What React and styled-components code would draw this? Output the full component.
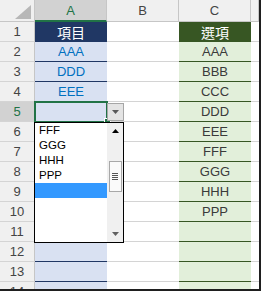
import React from 'react';
import styled, { createGlobalStyle, css } from 'styled-components';

const GlobalStyle = createGlobalStyle`
  html, body { margin: 0; padding: 0; background: #fff; }
  body { font-family: "Liberation Sans", Arial, sans-serif; }
`;

const cjk = `"Liberation Sans", "Noto Sans CJK TC", sans-serif`;

const Frame = styled.div`
  position: relative;
  width: 259px;
  height: 289px;
  overflow: hidden;
  border-right: 2px solid #1f1f1f;
  border-bottom: 2px solid #1f1f1f;
`;

const Sheet = styled.div`
  display: grid;
  grid-template-columns: 35px 72px 72px 72px 8px;
  grid-template-rows: 22px repeat(14, 20px);
  font-size: 13px;
`;

const Corner = styled.div`
  box-sizing: border-box;
  display: flex;
  justify-content: flex-end;
  align-items: flex-end;
  padding: 0 3px 2px 0;
  background: #f0f0f0;
  border-right: 1px solid #c6c6c6;
  border-bottom: 1px solid #c6c6c6;
`;

const ColHead = styled.div`
  box-sizing: border-box;
  display: flex;
  align-items: center;
  justify-content: center;
  background: ${p => (p.$active ? '#d2d2d2' : '#f0f0f0')};
  color: ${p => (p.$active ? '#217346' : '#444')};
  border-right: 1px solid #c6c6c6;
  border-bottom: ${p => (p.$active ? '2px solid #217346' : '1px solid #c6c6c6')};
`;

const RowHead = styled.div`
  box-sizing: border-box;
  display: flex;
  align-items: center;
  justify-content: center;
  background: ${p => (p.$active ? '#d2d2d2' : '#f0f0f0')};
  color: ${p => (p.$active ? '#217346' : '#444')};
  border-right: 1px solid #c6c6c6;
  border-bottom: 1px solid #d4d4d4;
`;

const tones = {
  plain: css`
    background: #fff;
    border-bottom: 1px solid #d4d4d4;
  `,
  blueHead: css`
    background: #203764;
    color: #fff;
    font-family: ${cjk};
    font-size: 14px;
    border-bottom: 1px solid #203764;
  `,
  blue: css`
    background: #d9e1f2;
    color: #0070c0;
    border-bottom: 1px solid #203764;
  `,
  greenHead: css`
    background: #375623;
    color: #fff;
    font-family: ${cjk};
    font-size: 14px;
    border-bottom: 1px solid #375623;
  `,
  green: css`
    background: #e2efda;
    color: #3a3a3a;
    border-bottom: 1px solid #375623;
  `,
};

const Cell = styled.div`
  box-sizing: border-box;
  display: flex;
  align-items: center;
  justify-content: center;
  ${p => tones[p.$tone]}
  ${p =>
    p.$selected &&
    css`
      position: relative;
      z-index: 1;
      outline: 2px solid #217346;
      outline-offset: -1px;
      &::after {
        content: '';
        position: absolute;
        right: -4px;
        bottom: -4px;
        width: 5px;
        height: 5px;
        background: #217346;
        border: 1px solid #fff;
      }
    `}
`;

const DropButton = styled.div`
  position: absolute;
  z-index: 2;
  left: 107px;
  top: 103px;
  box-sizing: border-box;
  width: 17px;
  height: 18px;
  display: flex;
  align-items: center;
  justify-content: center;
  background: #e4e4e4;
  border: 1px solid #a6a6a6;
`;

const List = styled.div`
  position: absolute;
  z-index: 3;
  left: 34px;
  top: 122px;
  box-sizing: border-box;
  width: 90px;
  height: 121px;
  display: flex;
  background: #fff;
  border: 1px solid #000;
`;

const Items = styled.div`
  flex: 1;
  display: flex;
  flex-direction: column;
`;

const Item = styled.div`
  height: 15px;
  line-height: 15px;
  padding-left: 4px;
  font-size: 11.5px;
  color: #000;
  background: ${p => (p.$highlight ? '#3399ff' : 'transparent')};
`;

const ScrollBar = styled.div`
  width: 16px;
  display: flex;
  flex-direction: column;
  align-items: center;
  background: #f0f0f0;
`;

const ArrowBox = styled.div`
  height: 16px;
  width: 16px;
  display: flex;
  align-items: center;
  justify-content: center;
`;

const Thumb = styled.div`
  box-sizing: border-box;
  margin-top: 22px;
  width: 13px;
  height: 31px;
  display: flex;
  align-items: center;
  justify-content: center;
  background: #fafafa;
  border: 1px solid #a8a8a8;
`;

const Track = styled.div`
  flex: 1;
`;

const Triangle = ({ up, color }) => (
  <svg width="7" height="4" viewBox="0 0 7 4">
    <polygon points={up ? '0,4 7,4 3.5,0' : '0,0 7,0 3.5,4'} fill={color} />
  </svg>
);

const Grip = () => (
  <svg width="6" height="7" viewBox="0 0 6 7">
    {[0, 2, 4, 6].map(y => (
      <rect key={y} x="0" y={y} width="6" height="1" fill="#555" />
    ))}
  </svg>
);

const colA = ['項目', 'AAA', 'DDD', 'EEE'];
const colC = ['選項', 'AAA', 'BBB', 'CCC', 'DDD', 'EEE', 'FFF', 'GGG', 'HHH', 'PPP'];
const options = ['FFF', 'GGG', 'HHH', 'PPP', ''];

const App = () => {
  const rows = Array.from({ length: 14 }, (_, i) => i + 1);

  return (
    <>
      <GlobalStyle />
      <Frame>
        <Sheet>
          <Corner>
            <svg width="16" height="14" viewBox="0 0 16 14">
              <polygon points="16,0 16,14 0,14" fill="#b7b7b7" />
            </svg>
          </Corner>
          <ColHead $active>A</ColHead>
          <ColHead>B</ColHead>
          <ColHead>C</ColHead>
          <ColHead />

          {rows.map(r => (
            <React.Fragment key={r}>
              <RowHead $active={r === 5}>{r}</RowHead>
              <Cell $tone={r === 1 ? 'blueHead' : 'blue'} $selected={r === 5}>
                {colA[r - 1] || ''}
              </Cell>
              <Cell $tone="plain" />
              <Cell $tone={r === 1 ? 'greenHead' : 'green'}>{colC[r - 1] || ''}</Cell>
              <Cell $tone="plain" />
            </React.Fragment>
          ))}
        </Sheet>

        <DropButton>
          <Triangle color="#595959" />
        </DropButton>

        <List>
          <Items>
            {options.map((o, i) => (
              <Item key={i} $highlight={o === ''}>
                {o}
              </Item>
            ))}
          </Items>
          <ScrollBar>
            <ArrowBox>
              <Triangle up color="#000" />
            </ArrowBox>
            <Thumb>
              <Grip />
            </Thumb>
            <Track />
            <ArrowBox>
              <Triangle color="#606060" />
            </ArrowBox>
          </ScrollBar>
        </List>
      </Frame>
    </>
  );
};

export default App;
